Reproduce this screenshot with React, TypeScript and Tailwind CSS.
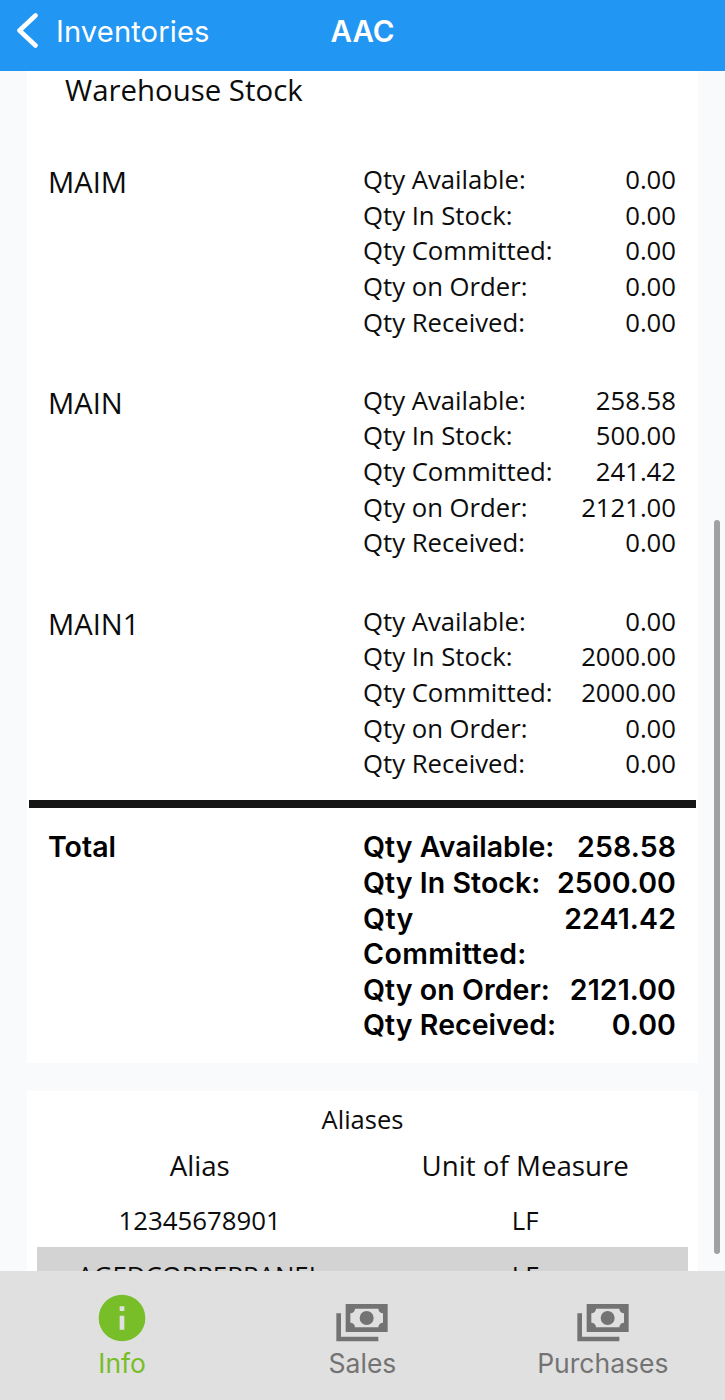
// src/App.tsx
type StockRow = { label: string; value: string };
type Warehouse = { name: string; rows: StockRow[] };

const LABELS = [
  "Qty Available:",
  "Qty In Stock:",
  "Qty Committed:",
  "Qty on Order:",
  "Qty Received:",
];

const toRows = (values: string[]): StockRow[] =>
  values.map((value, i) => ({ label: LABELS[i], value }));

const warehouses: Warehouse[] = [
  { name: "MAIM", rows: toRows(["0.00", "0.00", "0.00", "0.00", "0.00"]) },
  { name: "MAIN", rows: toRows(["258.58", "500.00", "241.42", "2121.00", "0.00"]) },
  { name: "MAIN1", rows: toRows(["0.00", "2000.00", "2000.00", "0.00", "0.00"]) },
];

const totals = toRows(["258.58", "2500.00", "2241.42", "2121.00", "0.00"]);

const INFO_PATH =
  "M13 9h-2V7h2v2Zm0 8h-2v-6h2v6ZM12 2a10 10 0 1 0 0 20 10 10 0 0 0 0-20Z";
const CASH_PATH =
  "M5 6h18v12H5V6Zm9 3a3 3 0 1 1 0 6 3 3 0 0 1 0-6ZM9 8a2 2 0 0 1-2 2v4a2 2 0 0 1 2 2h10a2 2 0 0 1 2-2v-4a2 2 0 0 1-2-2H9ZM1 10h2v10h16v2H1V10Z";

function Header() {
  return (
    <header className="flex h-[71px] shrink-0 items-start bg-[#2196f3] px-[15px] font-['Inter',sans-serif] text-white">
      <div className="flex flex-1 items-start">
        <svg className="mt-3 h-9 w-6" viewBox="0 0 24 36" fill="none">
          <path
            d="M20.500 3.500 4.500 18.500 20.500 33.500"
            stroke="currentColor"
            strokeWidth="4.600"
            strokeLinecap="round"
            strokeLinejoin="round"
          />
        </svg>
        <span className="ml-[17px] mt-[12px] text-[29.200px] leading-10 tracking-[0.1px]">
          Inventories
        </span>
      </div>
      <h1 className="mt-[11px] text-[29.500px] font-semibold leading-10">AAC</h1>
      <div className="flex-1" />
    </header>
  );
}

function StockBlock({ name, rows }: Warehouse) {
  return (
    <div className="flex h-[220.800px] pl-[21px] pr-[22px]">
      <p className="w-[315px] pt-px text-[29.200px] leading-[38px]">{name}</p>
      <ul className="flex-1">
        {rows.map((row) => (
          <li
            key={row.label}
            className="flex justify-between text-[25.700px] leading-[35.670px]"
          >
            <span>{row.label}</span>
            <span>{row.value}</span>
          </li>
        ))}
      </ul>
    </div>
  );
}

function TotalBlock() {
  return (
    <div className="flex pl-[21px] pr-[22px] pt-[21px] font-['Inter',sans-serif] text-[28.500px] font-semibold leading-[35.600px] text-black [font-feature-settings:'calt'_0,'liga'_0]">
      <p className="w-[315px]">Total</p>
      <ul className="flex-1">
        {totals.map((row) => (
          <li key={row.label} className="flex justify-between">
            <span
              className={
                row.label === "Qty Committed:" ? "w-[170px] tracking-[0.400px]" : "tracking-[0.050px]"
              }
            >
              {row.label}
            </span>
            <span className="tracking-[0.100px]">{row.value}</span>
          </li>
        ))}
      </ul>
    </div>
  );
}

function Aliases() {
  return (
    <section className="mx-[27px] mt-7 h-[180px] shrink-0 bg-white px-[10px] pt-[10px] text-center">
      <h2 className="text-[25.500px] leading-[36px]">Aliases</h2>
      <div className="mt-[9px] grid grid-cols-2 text-[27.700px] leading-[38px]">
        <span>Alias</span>
        <span>Unit of Measure</span>
      </div>
      <div className="mt-[9px] grid h-[54px] grid-cols-2 text-[25.800px] leading-[54px]">
        <span>12345678901</span>
        <span>LF</span>
      </div>
      <div className="grid h-[54px] grid-cols-2 bg-[#d3d3d3] text-[25.800px] leading-[56px]">
        <span>AGEDCOPPERPANEL</span>
        <span>LF</span>
      </div>
    </section>
  );
}

function Tab({ label, path, active }: { label: string; path: string; active?: boolean }) {
  return (
    <div
      className={`flex flex-col items-center ${active ? "text-[#78be28]" : "text-[#737373]"}`}
    >
      <svg className="h-[56px] w-[56px]" viewBox="0 0 24 24" fill="currentColor" fillRule="evenodd">
        <path d={path} />
      </svg>
      <span className="text-[26.500px] leading-[34px]">{label}</span>
    </div>
  );
}

export default function App() {
  return (
    <div className="relative flex h-[1400px] w-[725px] flex-col overflow-hidden bg-[#f9fafc] font-['Open_Sans',sans-serif] text-[#0c0c0c]">
      <Header />

      <main className="flex h-[1200px] shrink-0 flex-col overflow-hidden">
        {/* Warehouse stock */}
        <section className="mx-[27px] h-[992px] shrink-0 bg-white">
          <h2 className="h-[91px] pl-[38px] text-[29.400px] leading-[38px]">Warehouse Stock</h2>
          {warehouses.map((w) => (
            <StockBlock key={w.name} {...w} />
          ))}
          <div className="mx-[2px] -mt-[24px] h-[8px] bg-[#151515]" />
          <TotalBlock />
        </section>

        <Aliases />
      </main>

      {/* Bottom tabs */}
      <nav className="grid flex-1 grid-cols-3 bg-[#e0e0e0] px-[2px] pt-[19px] font-['Inter',sans-serif]">
        <Tab label="Info" path={INFO_PATH} active />
        <Tab label="Sales" path={CASH_PATH} />
        <Tab label="Purchases" path={CASH_PATH} />
      </nav>

      {/* Scroll indicator */}
      <div className="absolute right-[5px] top-[520px] h-[734px] w-[6px] rounded-full bg-[#a1a1a2]" />
    </div>
  );
}
